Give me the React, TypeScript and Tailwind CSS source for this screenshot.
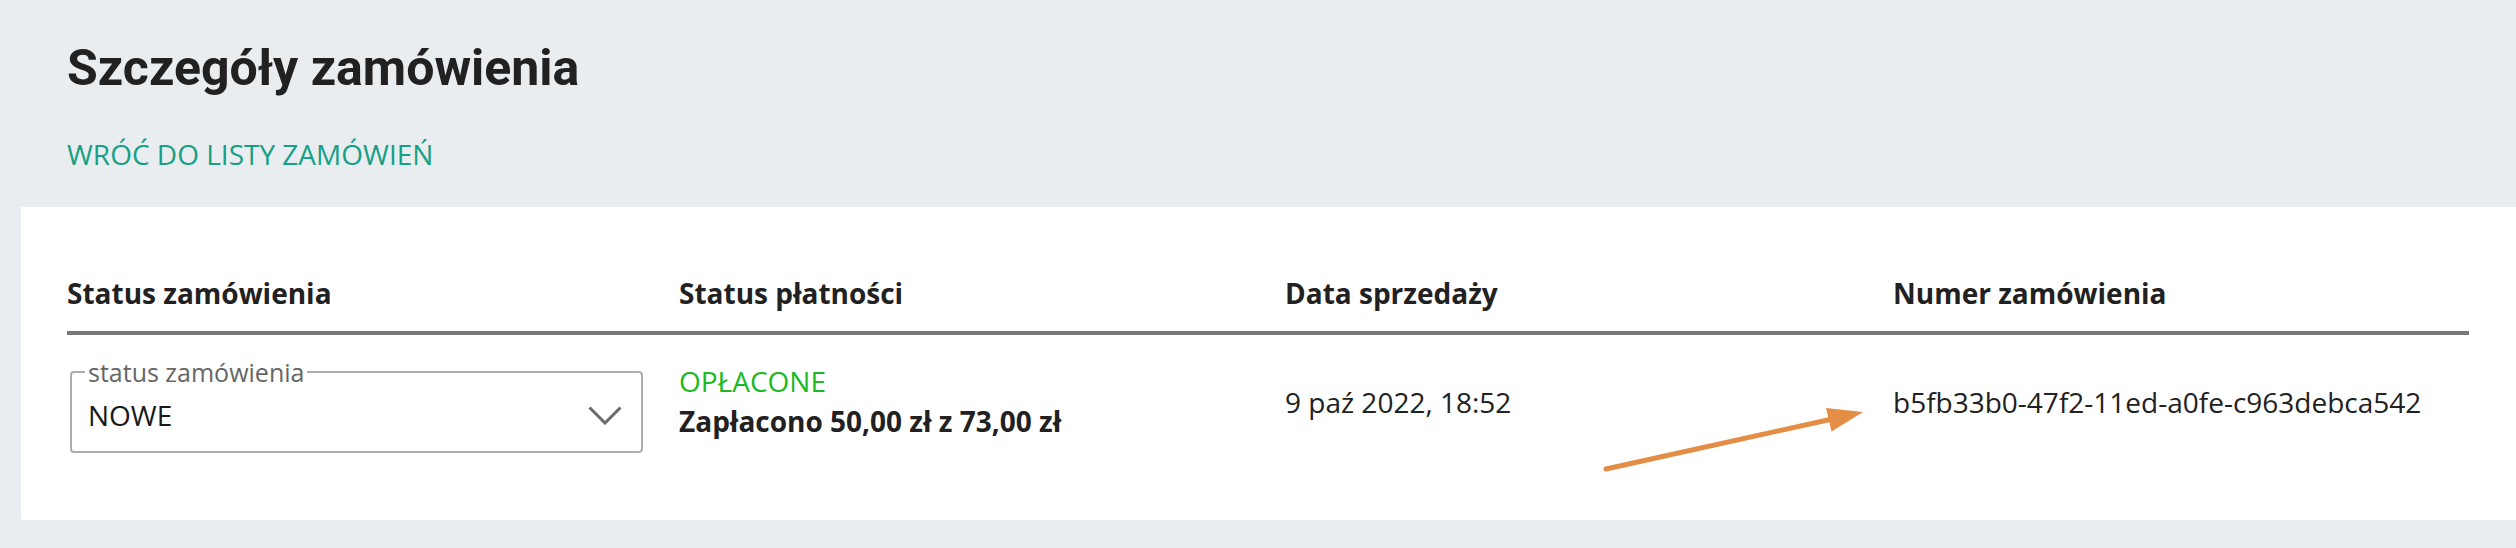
import React from "react";

export default function App() {
  return (
    <div className="relative w-[2516px] h-[548px] bg-[#e9edf0] overflow-hidden" style={{ fontFamily: '"Open Sans", sans-serif' }}>
      <div className="pl-[67px] pt-[38px]">
        <h1 className="text-[50px] leading-[60px] font-bold text-[#212121]" style={{ fontFamily: 'Roboto, sans-serif' }}>
          Szczegóły zamówienia
        </h1>
        <a className="block mt-[36px] text-[28px] leading-[40px] text-[#16a086]">WRÓĆ DO LISTY ZAMÓWIEŃ</a>
      </div>
      <div className="ml-[21px] mt-[33px] bg-white pl-[46px] pr-[47px] pt-[66px] h-[313px]">
        <div className="grid grid-cols-[612px_606px_608px_1fr] border-b-4 border-[#787878] pb-[18px] text-[28px] leading-[40px] font-bold text-[#212121]">
          <div>Status zamówienia</div>
          <div>Status płatności</div>
          <div>Data sprzedaży</div>
          <div>Numer zamówienia</div>
        </div>
        <div className="grid grid-cols-[612px_606px_608px_1fr] items-start text-[28px] leading-[40px] text-[#212121]">
          <div className="pt-[36px] pl-[3px] pr-[36px]">
            <div className="relative border-2 border-[#adadad] rounded-[4px] pt-[22px] pb-[16px] pl-[16px] pr-[19px] flex items-center justify-between">
              <span className="absolute left-[13px] top-[-13px] px-[3px] bg-white text-[25px] leading-[25px] text-[#666666]">status zamówienia</span>
              <span className="text-[#1a1a1a]">NOWE</span>
              <svg width="34" height="19" viewBox="0 0 34 19" fill="none">
                <path d="M1.5 1.5 L17 17 L32.5 1.5" stroke="#6b6b6b" strokeWidth="3" strokeLinecap="butt" strokeLinejoin="miter" />
              </svg>
            </div>
          </div>
          <div className="pt-[26px]">
            <div className="text-[#1db924]">OPŁACONE</div>
            <div className="font-bold">Zapłacono 50,00 zł z 73,00 zł</div>
          </div>
          <div className="pt-[47px]">9 paź 2022, 18:52</div>
          <div className="pt-[47px]">b5fb33b0-47f2-11ed-a0fe-c963debca542</div>
        </div>
      </div>
      <svg className="absolute left-0 top-0 pointer-events-none" width="2516" height="548" viewBox="0 0 2516 548">
        <line x1="1606" y1="469" x2="1830" y2="419.5" stroke="#e38d45" strokeWidth="5" strokeLinecap="round" />
        <polygon points="1863,412 1826,408 1831.5,431.5" fill="#e38d45" />
      </svg>
    </div>
  );
}
